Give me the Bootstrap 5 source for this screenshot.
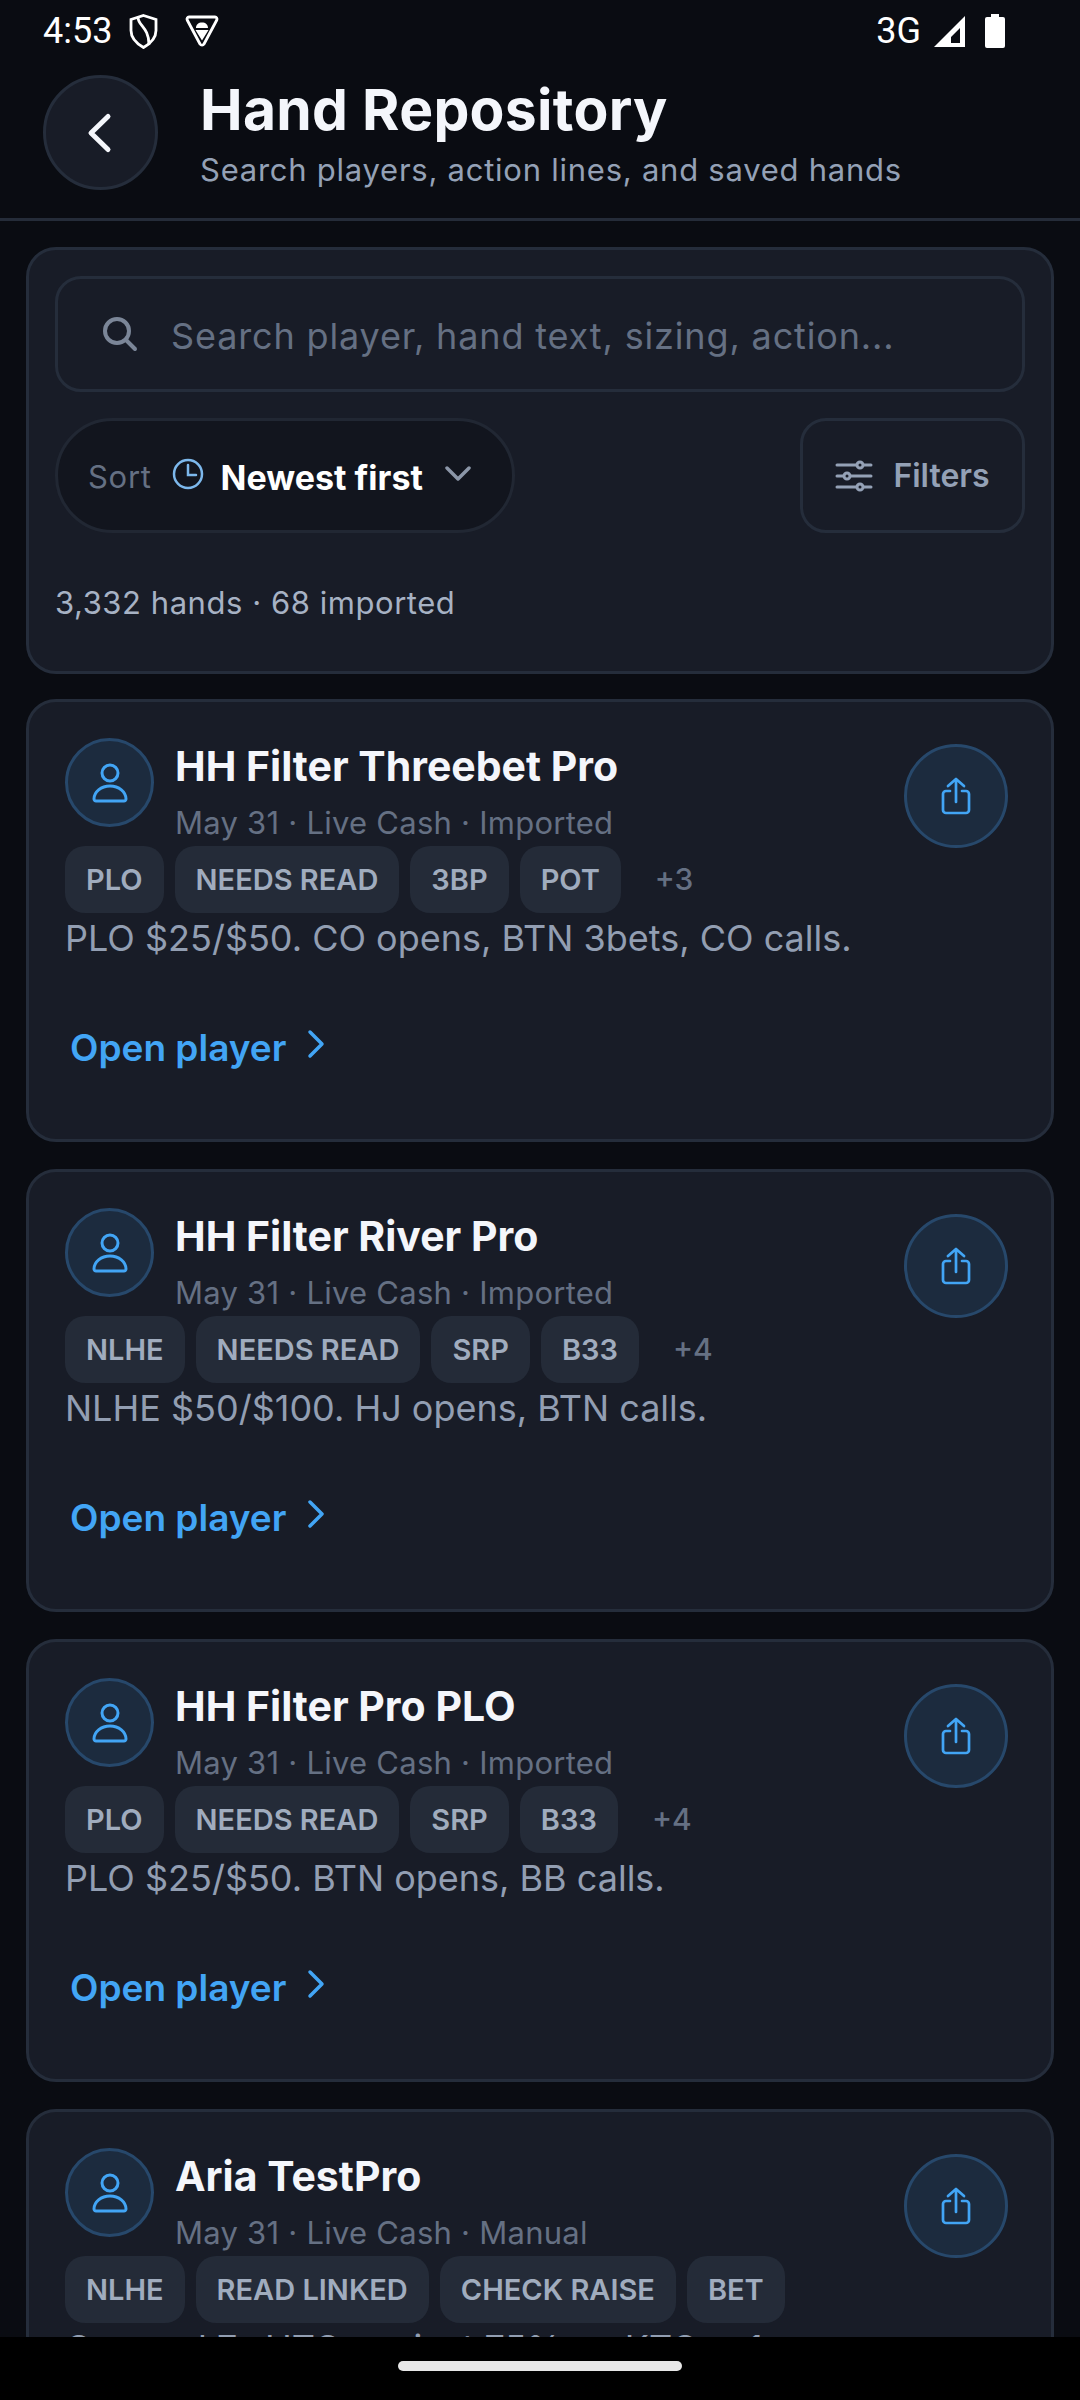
<!DOCTYPE html>
<html lang="en">
<head>
<meta charset="UTF-8">
<meta name="viewport" content="width=device-width, initial-scale=1.0">
<title>Hand Repository</title>
<link href="https://cdn.jsdelivr.net/npm/bootstrap@5.3.3/dist/css/bootstrap.min.css" rel="stylesheet">
<style>
html, body { height: 2400px; background: #0a0c12; }
body { font-family: Inter, "Liberation Sans", sans-serif; color: #f4f6fb; overflow: hidden; }
.screen { height: 2400px; }
.status-bar { height: 62px; padding: 0 75px 0 43px; font-family: Roboto, sans-serif; font-size: 36px; color: #fff; }
.status-bar svg { display: block; }
.shield-icon { margin-left: 17px; }
.droid-icon { margin-left: 27px; }
.signal-icon { margin-left: 12px; }
.battery-icon { margin-left: 19px; }
.app-head { height: 159px; padding: 13px 0 0 43px; border-bottom: 3px solid #252c39; }
.back-btn { width: 115px; height: 115px; background: #181c27; border: 3px solid #252d3b; }
.head-text { margin-left: 42px; margin-top: 1px; }
.head-title { font-size: 57px; font-weight: 700; line-height: 68px; letter-spacing: .3px; }
.head-sub { font-size: 31px; line-height: 40px; color: #94a1b6; margin-top: 6px; letter-spacing: .75px; }
.scroller { overflow: hidden; padding: 26px 26px 0; min-height: 0; }
.panel { background: #181c27; border: 3px solid #252d3b; border-radius: 30px; }
.search-panel { height: 427px; padding: 26px; margin-bottom: 25px; }
.search-box { height: 116px; border: 3px solid #252d3b; border-radius: 26px; padding: 3px 42px 0 44px; font-size: 36px; letter-spacing: .85px; color: #657083; }
.search-box svg { margin: -3px 33px 0 0; }
.tools-row { margin-top: 26px; }
.sort-pill { width: 460px; height: 115px; background: #12151e; border: 3px solid #212733; padding: 3px 0 0 30px; font-size: 31px; letter-spacing: .7px; color: #657083; }
.sort-clock { margin-left: 20px; margin-top: -6px; }
.sort-value { color: #fff; font-size: 34px; font-weight: 700; margin-left: 17px; letter-spacing: 0; }
.sort-chevron { margin-left: 22px; margin-top: -6px; }
.filter-btn { width: 225px; height: 115px; border: 3px solid #252d3b; border-radius: 26px; font-size: 32px; font-weight: 600; color: #94a1b6; }
.filter-btn svg { margin-right: 20px; }
.count-line { margin-top: 50px; font-size: 31px; color: #a7b2c4; line-height: 40px; letter-spacing: .55px; }
.hand-panel { height: 443px; padding: 36px 36px 0; margin-bottom: 27px; position: relative; }
.avatar { width: 89px; height: 89px; background: #1c2b3e; border: 3px solid #27486b; }
.hand-top { height: 108px; }
.hand-head { margin-left: 21px; }
.hand-name { font-size: 41px; font-weight: 700; line-height: 56px; }
.hand-meta { font-size: 31px; line-height: 40px; color: #657083; margin-top: 9px; letter-spacing: .25px; }
.share-btn { position: absolute; top: 42px; right: 43px; width: 104px; height: 104px; background: #1c2b3e; border: 3px solid #27486b; }
.tag-row { gap: 11px; }
.hand-tag { height: 67px; padding: 1px 21px 0; background: #242b38; border-radius: 20px; font-size: 29px; font-weight: 600; color: #a0acbe; }
.tag-more { font-size: 30px; font-weight: 500; color: #657083; margin-left: 23px; }
.hand-desc { font-size: 36px; line-height: 50px; color: #929eb2; }
.open-link { margin: 60px 0 0 5px; font-size: 37px; font-weight: 600; color: #42a5f5; text-decoration: none; line-height: 50px; }
.open-link svg { margin: -8px 0 0 21px; }
.nav-area { height: 63px; background: #000; flex-shrink: 0; }
.home-pill { width: 284px; height: 10px; background: #e8e8e8; border-radius: 5px; }
</style>
</head>
<body>
<div class="screen d-flex flex-column">
  <div class="status-bar d-flex align-items-center justify-content-between flex-shrink-0">
    <div class="d-flex align-items-center">
      <span>4:53</span>
      <svg class="shield-icon" width="29" height="35" viewBox="0 0 29 35" fill="none" stroke="#fff" stroke-width="2.800"><path d="M14.500 1.500l12.500 4v11c0 8-5.500 13-12.500 17C7.500 29.500 2 24.500 2 16.500v-11z"/><path d="M9 3.500c0 8 11 10 11 27"/></svg>
      <svg class="droid-icon" width="34" height="32" viewBox="0 0 34 32"><path d="M4 2h26c1.500 0 2.500 1.500 1.800 3L19 29c-.9 1.500-3 1.500-4 0L2.200 5C1.500 3.500 2.500 2 4 2z" fill="none" stroke="#fff" stroke-width="2.800" stroke-linejoin="round"/><path d="M11 13c0-3.500 2.500-5.500 6-5.500s6 2 6 5.500zM10.500 15h13L17 25.500z" fill="#fff"/></svg>
    </div>
    <div class="d-flex align-items-center">
      <span>3G</span>
      <svg class="signal-icon" width="33" height="33" viewBox="0 0 33 33"><path d="M32 1v31H1zM27 13l-9 9v6h9z" fill="#fff" fill-rule="evenodd"/></svg>
      <svg class="battery-icon" width="20" height="34" viewBox="0 0 20 34"><path d="M6 0h8v3h4a2 2 0 0 1 2 2v27a2 2 0 0 1-2 2H2a2 2 0 0 1-2-2V5a2 2 0 0 1 2-2h4z" fill="#fff"/></svg>
    </div>
  </div>

  <div class="app-head d-flex flex-shrink-0">
    <div class="back-btn rounded-circle d-flex align-items-center justify-content-center">
      <svg width="32" height="44" viewBox="0 0 32 44" fill="none" stroke="#f4f6fb" stroke-width="5" stroke-linecap="round" stroke-linejoin="round"><path d="M23 5.500L6 22l17 16.500"/></svg>
    </div>
    <div class="head-text">
      <div class="head-title">Hand Repository</div>
      <div class="head-sub">Search players, action lines, and saved hands</div>
    </div>
  </div>

  <div class="scroller flex-grow-1">
    <div class="panel search-panel">
      <div class="search-box d-flex align-items-center">
        <svg width="36" height="36" viewBox="0 0 36 36" fill="none" stroke="#7b8698" stroke-width="4" stroke-linecap="round"><circle cx="15" cy="15" r="12"/><path d="M24 24l9 9"/></svg>
        <span>Search player, hand text, sizing, action...</span>
      </div>
      <div class="tools-row d-flex justify-content-between">
        <div class="sort-pill rounded-pill d-flex align-items-center">
          <span>Sort</span>
          <svg class="sort-clock" width="32" height="32" viewBox="0 0 32 32" fill="none" stroke="#7db8ec" stroke-width="2.500" stroke-linecap="round"><circle cx="16" cy="16" r="14"/><path d="M16 7v10h8"/></svg>
          <span class="sort-value">Newest first</span>
          <svg class="sort-chevron" width="26" height="16" viewBox="0 0 26 16" fill="none" stroke="#8b96a8" stroke-width="3.500" stroke-linecap="round" stroke-linejoin="round"><path d="M2 2l11 11L24 2"/></svg>
        </div>
        <div class="filter-btn d-flex align-items-center justify-content-center">
          <svg width="38" height="32" viewBox="0 0 38 32" fill="none" stroke="#94a1b6" stroke-width="3" stroke-linecap="round"><path d="M2 5h34M2 16h34M2 27h34"/><circle cx="25" cy="5" r="3" fill="#181c27"/><circle cx="12" cy="16" r="3" fill="#181c27"/><circle cx="25" cy="27" r="3" fill="#181c27"/></svg>
          <span>Filters</span>
        </div>
      </div>
      <div class="count-line">3,332 hands · 68 imported</div>
    </div>

    <div class="panel hand-panel">
      <div class="hand-top d-flex">
        <div class="avatar rounded-circle d-flex align-items-center justify-content-center flex-shrink-0">
          <svg width="36" height="40" viewBox="0 0 36 40" fill="none" stroke="#42a5f5" stroke-width="3" stroke-linejoin="round"><circle cx="18" cy="10" r="8"/><path d="M2 36c0-7 7-13 16-13s16 6 16 13c0 1-1 2-2 2H4c-1 0-2-1-2-2z"/></svg>
        </div>
        <div class="hand-head">
          <div class="hand-name">HH Filter Threebet Pro</div>
          <div class="hand-meta">May 31 · Live Cash · Imported</div>
        </div>
      </div>
      <div class="share-btn rounded-circle d-flex align-items-center justify-content-center">
        <svg width="30" height="38" viewBox="0 0 30 38" fill="none" stroke="#42a5f5" stroke-width="2.700" stroke-linecap="round" stroke-linejoin="round"><path d="M9 14H5a3 3 0 0 0-3 3v16a3 3 0 0 0 3 3h20a3 3 0 0 0 3-3V17a3 3 0 0 0-3-3h-4"/><path d="M15 25V2M7 9l8-7 8 7"/></svg>
      </div>
      <div class="tag-row d-flex align-items-center">
        <div class="hand-tag d-flex align-items-center">PLO</div>
        <div class="hand-tag d-flex align-items-center">NEEDS READ</div>
        <div class="hand-tag d-flex align-items-center">3BP</div>
        <div class="hand-tag d-flex align-items-center">POT</div>
        <div class="tag-more">+3</div>
      </div>
      <div class="hand-desc">PLO $25/$50. CO opens, BTN 3bets, CO calls.</div>
      <a class="open-link d-inline-flex align-items-center" href="#">Open player<svg width="18" height="30" viewBox="0 0 18 30" fill="none" stroke="#42a5f5" stroke-width="3.500" stroke-linecap="round" stroke-linejoin="round"><path d="M3 3l12 12L3 27"/></svg></a>
    </div>

    <div class="panel hand-panel">
      <div class="hand-top d-flex">
        <div class="avatar rounded-circle d-flex align-items-center justify-content-center flex-shrink-0">
          <svg width="36" height="40" viewBox="0 0 36 40" fill="none" stroke="#42a5f5" stroke-width="3" stroke-linejoin="round"><circle cx="18" cy="10" r="8"/><path d="M2 36c0-7 7-13 16-13s16 6 16 13c0 1-1 2-2 2H4c-1 0-2-1-2-2z"/></svg>
        </div>
        <div class="hand-head">
          <div class="hand-name">HH Filter River Pro</div>
          <div class="hand-meta">May 31 · Live Cash · Imported</div>
        </div>
      </div>
      <div class="share-btn rounded-circle d-flex align-items-center justify-content-center">
        <svg width="30" height="38" viewBox="0 0 30 38" fill="none" stroke="#42a5f5" stroke-width="2.700" stroke-linecap="round" stroke-linejoin="round"><path d="M9 14H5a3 3 0 0 0-3 3v16a3 3 0 0 0 3 3h20a3 3 0 0 0 3-3V17a3 3 0 0 0-3-3h-4"/><path d="M15 25V2M7 9l8-7 8 7"/></svg>
      </div>
      <div class="tag-row d-flex align-items-center">
        <div class="hand-tag d-flex align-items-center">NLHE</div>
        <div class="hand-tag d-flex align-items-center">NEEDS READ</div>
        <div class="hand-tag d-flex align-items-center">SRP</div>
        <div class="hand-tag d-flex align-items-center">B33</div>
        <div class="tag-more">+4</div>
      </div>
      <div class="hand-desc">NLHE $50/$100. HJ opens, BTN calls.</div>
      <a class="open-link d-inline-flex align-items-center" href="#">Open player<svg width="18" height="30" viewBox="0 0 18 30" fill="none" stroke="#42a5f5" stroke-width="3.500" stroke-linecap="round" stroke-linejoin="round"><path d="M3 3l12 12L3 27"/></svg></a>
    </div>

    <div class="panel hand-panel">
      <div class="hand-top d-flex">
        <div class="avatar rounded-circle d-flex align-items-center justify-content-center flex-shrink-0">
          <svg width="36" height="40" viewBox="0 0 36 40" fill="none" stroke="#42a5f5" stroke-width="3" stroke-linejoin="round"><circle cx="18" cy="10" r="8"/><path d="M2 36c0-7 7-13 16-13s16 6 16 13c0 1-1 2-2 2H4c-1 0-2-1-2-2z"/></svg>
        </div>
        <div class="hand-head">
          <div class="hand-name">HH Filter Pro PLO</div>
          <div class="hand-meta">May 31 · Live Cash · Imported</div>
        </div>
      </div>
      <div class="share-btn rounded-circle d-flex align-items-center justify-content-center">
        <svg width="30" height="38" viewBox="0 0 30 38" fill="none" stroke="#42a5f5" stroke-width="2.700" stroke-linecap="round" stroke-linejoin="round"><path d="M9 14H5a3 3 0 0 0-3 3v16a3 3 0 0 0 3 3h20a3 3 0 0 0 3-3V17a3 3 0 0 0-3-3h-4"/><path d="M15 25V2M7 9l8-7 8 7"/></svg>
      </div>
      <div class="tag-row d-flex align-items-center">
        <div class="hand-tag d-flex align-items-center">PLO</div>
        <div class="hand-tag d-flex align-items-center">NEEDS READ</div>
        <div class="hand-tag d-flex align-items-center">SRP</div>
        <div class="hand-tag d-flex align-items-center">B33</div>
        <div class="tag-more">+4</div>
      </div>
      <div class="hand-desc">PLO $25/$50. BTN opens, BB calls.</div>
      <a class="open-link d-inline-flex align-items-center" href="#">Open player<svg width="18" height="30" viewBox="0 0 18 30" fill="none" stroke="#42a5f5" stroke-width="3.500" stroke-linecap="round" stroke-linejoin="round"><path d="M3 3l12 12L3 27"/></svg></a>
    </div>

    <div class="panel hand-panel">
      <div class="hand-top d-flex">
        <div class="avatar rounded-circle d-flex align-items-center justify-content-center flex-shrink-0">
          <svg width="36" height="40" viewBox="0 0 36 40" fill="none" stroke="#42a5f5" stroke-width="3" stroke-linejoin="round"><circle cx="18" cy="10" r="8"/><path d="M2 36c0-7 7-13 16-13s16 6 16 13c0 1-1 2-2 2H4c-1 0-2-1-2-2z"/></svg>
        </div>
        <div class="hand-head">
          <div class="hand-name">Aria TestPro</div>
          <div class="hand-meta">May 31 · Live Cash · Manual</div>
        </div>
      </div>
      <div class="share-btn rounded-circle d-flex align-items-center justify-content-center">
        <svg width="30" height="38" viewBox="0 0 30 38" fill="none" stroke="#42a5f5" stroke-width="2.700" stroke-linecap="round" stroke-linejoin="round"><path d="M9 14H5a3 3 0 0 0-3 3v16a3 3 0 0 0 3 3h20a3 3 0 0 0 3-3V17a3 3 0 0 0-3-3h-4"/><path d="M15 25V2M7 9l8-7 8 7"/></svg>
      </div>
      <div class="tag-row d-flex align-items-center">
        <div class="hand-tag d-flex align-items-center">NLHE</div>
        <div class="hand-tag d-flex align-items-center">READ LINKED</div>
        <div class="hand-tag d-flex align-items-center">CHECK RAISE</div>
        <div class="hand-tag d-flex align-items-center">BET</div>
      </div>
      <div class="hand-desc">Crossed 7s UTG against 75% on KTQ, a 1 ...</div>
    </div>
  </div>

  <div class="nav-area d-flex justify-content-center">
    <div class="home-pill mt-4 flex-shrink-0"></div>
  </div>
</div>
<script src="https://cdn.jsdelivr.net/npm/bootstrap@5.3.3/dist/js/bootstrap.bundle.min.js"></script>
</body>
</html>
